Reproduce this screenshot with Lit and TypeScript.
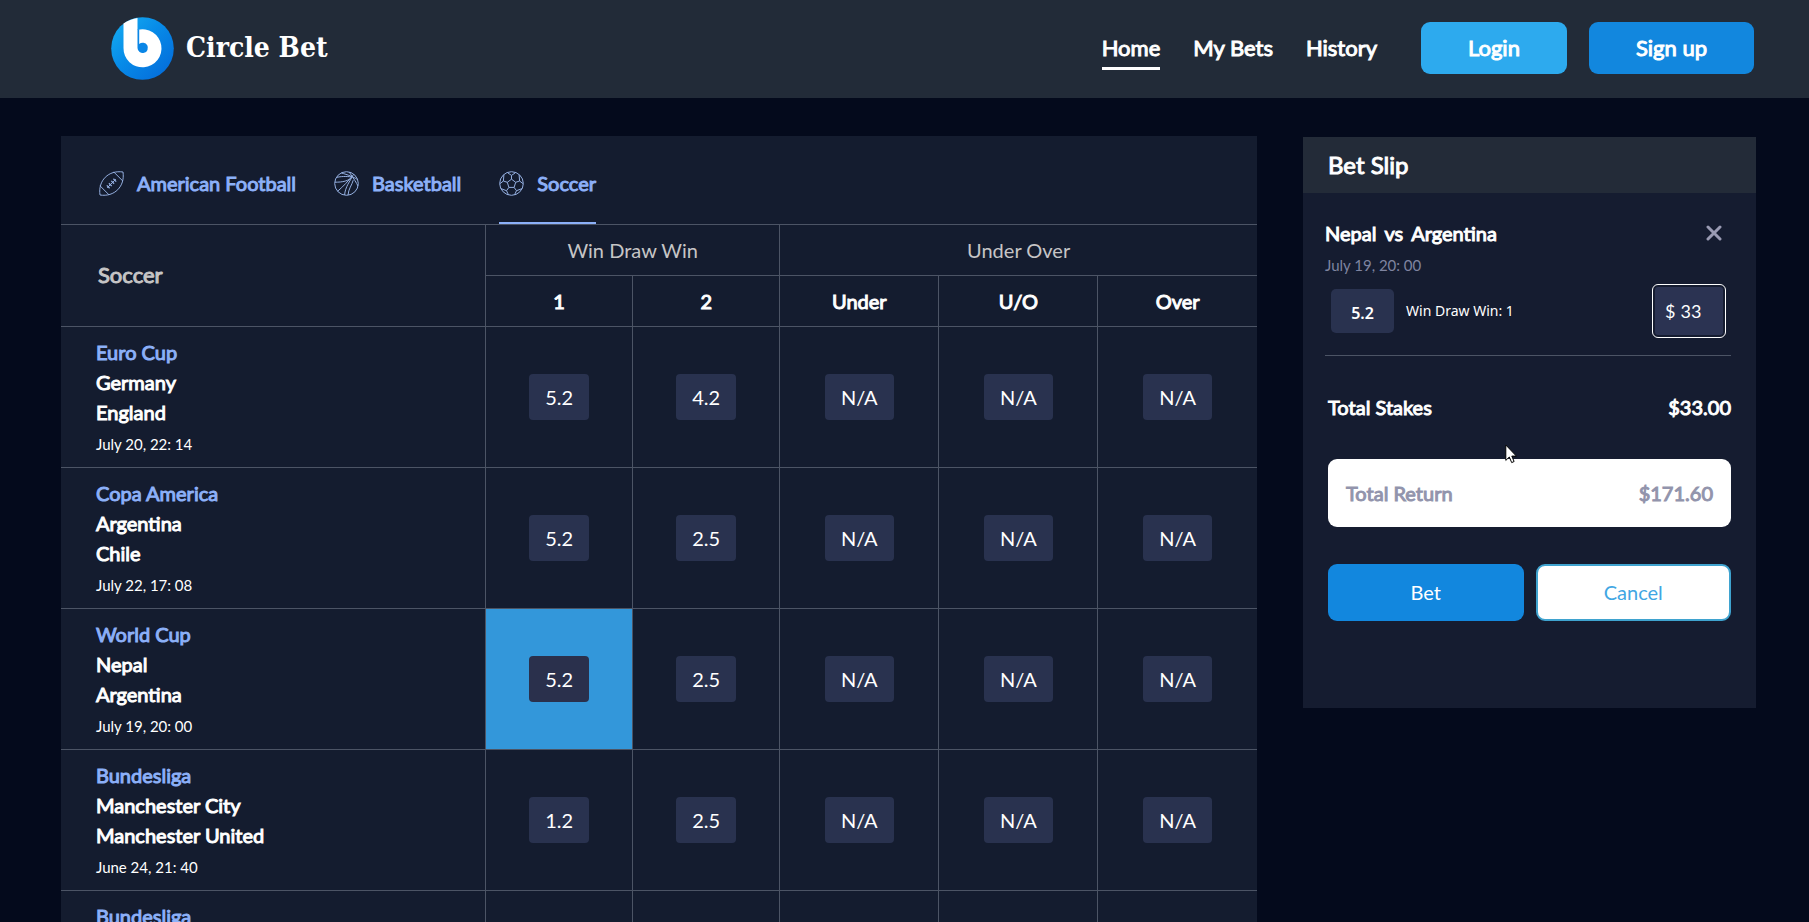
import { LitElement, html, css, svg, nothing } from "lit";
import { customElement, state } from "lit/decorators.js";
import { classMap } from "lit/directives/class-map.js";

interface Match {
  league: string;
  teams: string[];
  date: string;
  odds: string[];
}

const NA = ["N/A", "N/A", "N/A"];

const MATCHES: Match[] = [
  { league: "Euro Cup", teams: ["Germany", "England"], date: "July 20, 22: 14", odds: ["5.2", "4.2", ...NA] },
  { league: "Copa America", teams: ["Argentina", "Chile"], date: "July 22, 17: 08", odds: ["5.2", "2.5", ...NA] },
  { league: "World Cup", teams: ["Nepal", "Argentina"], date: "July 19, 20: 00", odds: ["5.2", "2.5", ...NA] },
  { league: "Bundesliga", teams: ["Manchester City", "Manchester United"], date: "June 24, 21: 40", odds: ["1.2", "2.5", ...NA] },
  { league: "Bundesliga", teams: [], date: "", odds: ["", "", "", "", ""] },
];

const shared = css`
  * { box-sizing: border-box; }
  :host { font-family: Lato, "Liberation Sans", sans-serif; font-size: 20px; line-height: 30px; color: #fff; }
  h1, h2, h3, p, ul { margin: 0; padding: 0; font-size: 20px; font-weight: 400; list-style: none; }
  button, input { font: inherit; color: inherit; margin: 0; padding: 0; border: 0; background: none; }
  a { color: inherit; text-decoration: none; }
  .strong { -webkit-text-stroke: 1px currentColor; }
`;

const football = svg`<path d="M1 24C-1.2 9.6 9.6 -1.2 24 1C26.2 15.4 15.4 26.2 1 24Z"/>
  <path d="M1 14.8L10.2 24M14.8 1L24 10.2M8.2 16.8L16.8 8.2"/>
  <path stroke-width="1.3" d="M7.8 14.4L10.6 17.2M9.9 12.3L12.7 15.1M12.3 9.9L15.1 12.7M14.4 7.8L17.2 10.6"/>`;

const basketball = svg`<circle cx="12.5" cy="12.5" r="11.8"/>
  <path d="M19.8 3.3C14.8 9.4 9 15.8 3.6 20.2M15.2 1.1C19.6 7.4 22.6 12 24 15M7.4 2C13.5 3.6 20 6.2 22.9 8.2M2.6 6.4C9 4.8 15.4 5.8 18.2 5.8M.9 11.2C8.5 11.2 14.8 10.2 18.4 5.4C16.4 9.6 11.2 15.8 10.6 24M19.2 9.2C18 14 14.4 18 14 24.1"/>`;

const soccer = svg`<circle cx="12.5" cy="12.5" r="11.8"/>
  <path d="M12.5 8.2L16.7 11.3L15.1 16.4H9.9L8.3 11.3ZM12.5 8.2V4.4M16.7 11.3L20.6 10M15.1 16.4L17.5 19.7M9.9 16.4L7.5 19.7M8.3 11.3L4.4 10M8.8 1.9L12.5 4.4L16.2 1.9M20.1 3.8L20.6 10L24.2 12.8M23.1 17.6L17.5 19.7L15.6 23.7M9.4 23.7L7.5 19.7L1.9 17.6M.8 12.8L4.4 10L4.9 3.8"/>`;

@customElement("bet-header")
class BetHeader extends LitElement {
  static styles = [shared, css`
    :host { display: block; background: #222b38; }
    .bar { display: flex; align-items: center; height: 98px; padding: 0 55px 2px 111px; }
    .brand { display: flex; align-items: center; gap: 12px; margin-right: auto; }
    .brand svg { display: block; width: 63px; height: 63px; }
    .name { font: 700 28px/40px "DejaVu Serif Condensed", "DejaVu Serif", serif; }
    nav ul { display: flex; gap: 33px; margin-right: 44px; }
    nav a { display: block; font-size: 22px; line-height: 38px; padding-top: 3px; border-bottom: 3px solid transparent; }
    nav a.active { border-color: #fff; }
    .actions { display: flex; gap: 22px; }
    .action { height: 52px; padding: 0 47px; border-radius: 9px; font-size: 22px; background: #1287de; }
    .action.light { background: #2daaee; }
  `];
  render() {
    return html`<header class="bar">
      <a class="brand" href="#">
        <svg viewBox="0 0 63 63" aria-hidden="true">
          <defs><linearGradient id="g" x1="0" y1="0" x2="1" y2="1">
            <stop offset="0" stop-color="#16b0f2"/><stop offset=".45" stop-color="#078be8"/><stop offset="1" stop-color="#0467d8"/>
          </linearGradient></defs>
          <circle cx="31.5" cy="31.5" r="31.3" fill="url(#g)"/>
          <path fill="#fff" d="M12.5 6.5Q19 2 26.5 1V13A19 19 0 1 1 12.5 31Z"/>
          <path fill="#0a86e6" d="M26.5 12.6L28.2 12.2V27A5.2 5.2 0 1 1 26.5 31Z"/>
        </svg>
        <span class="name">Circle Bet</span>
      </a>
      <nav aria-label="Main"><ul>
        ${["Home", "My Bets", "History"].map((t, i) => html`<li><a href="#" class=${classMap({ strong: true, active: i === 0 })}>${t}</a></li>`)}
      </ul></nav>
      <div class="actions">
        <button class="action light strong">Login</button>
        <button class="action strong">Sign up</button>
      </div>
    </header>`;
  }
}

@customElement("odds-board")
class OddsBoard extends LitElement {
  static styles = [shared, css`
    :host { display: block; background: #141c2f; }
    .tabs { display: flex; gap: 38px; padding: 0 38px; height: 88px; }
    .tab { display: flex; align-items: center; gap: 13px; color: #8cb0f8; border-bottom: 2px solid transparent; padding-top: 8px; }
    .tab.active { border-color: #8cb0f8; }
    .tab svg { width: 25px; height: 25px; fill: none; stroke: #94afe0; stroke-width: 1; overflow: visible; }
    table { width: 100%; border-collapse: collapse; table-layout: fixed; border-top: 1px solid #4c5465; }
    .c-match { width: 35.5%; }
    .c-win { width: 12.3%; }
    th, td { padding: 0; font-weight: 400; border: 1px solid #4c5465; text-align: center; }
    tr > :first-child:not(.in) { border-left: 0; }
    .edge { border-right: 0; }
    thead th { height: 51px; }
    .group { color: #c6c5c6; }
    thead .sport { color: #c6c5c6; font-size: 22px; text-align: left; padding: 0 0 2px 37px; }
    tbody tr { height: 141px; }
    .match { text-align: left; vertical-align: top; padding: 10px 35px; }
    .match p { height: 30px; }
    .league { color: #8cb0f8; }
    .match .date { font-size: 15px; line-height: 34px; }
    .odd { height: 46px; padding: 0 16px; border-radius: 4px; background: #29324f; vertical-align: middle; }
    .selected { background: #3397da; }
    .selected .odd { background: #2a304c; }
  `];
  @state() selected = "2-0";
  render() {
    const tabs: [string, unknown][] = [["American Football", football], ["Basketball", basketball], ["Soccer", soccer]];
    return html`
      <nav class="tabs" aria-label="Sports">
        ${tabs.map(([t, icon], i) => html`<a href="#" class=${classMap({ tab: true, active: i === 2 })}>
          <svg viewBox="0 0 25 25" aria-hidden="true">${icon}</svg><span class="strong">${t}</span></a>`)}
      </nav>
      <table>
        <colgroup><col class="c-match"><col class="c-win"><col class="c-win"><col><col><col></colgroup>
        <thead>
          <tr><th class="sport strong" rowspan="2">Soccer</th><th class="group" colspan="2">Win Draw Win</th><th class="group edge" colspan="3">Under Over</th></tr>
          <tr>${["1", "2", "Under", "U/O", "Over"].map((t, i) => html`<th class=${classMap({ in: true, strong: true, edge: i === 4 })}>${t}</th>`)}</tr>
        </thead>
        <tbody>
          ${MATCHES.map((m, r) => html`<tr>
            <td class="match">
              <p class="league strong">${m.league}</p>
              ${m.teams.map(t => html`<p class="strong">${t}</p>`)}
              ${m.date ? html`<p class="date">${m.date}</p>` : nothing}
            </td>
            ${m.odds.map((o, c) => html`<td class=${classMap({ selected: this.selected === `${r}-${c}`, edge: c === 4 })}>
              ${o ? html`<button class="odd" @click=${() => (this.selected = `${r}-${c}`)}>${o}</button>` : nothing}
            </td>`)}
          </tr>`)}
        </tbody>
      </table>`;
  }
}

@customElement("bet-slip")
class BetSlip extends LitElement {
  static styles = [shared, css`
    :host { display: block; background: #151c30; padding-bottom: 87px; }
    .title { background: #232b38; font-size: 24px; line-height: 56px; padding-left: 25px; }
    .pick { margin: 0 25px 0 22px; padding-top: 24px; border-bottom: 1px solid #4c5465; }
    .top { display: flex; justify-content: space-between; align-items: center; height: 32px; }
    .versus { display: flex; gap: 8px; }
    .close { width: 34px; height: 32px; display: grid; place-items: center; color: #9a9bb3; }
    .close svg { width: 16px; height: 16px; stroke: currentColor; stroke-width: 3; stroke-linecap: round; }
    .date { font-size: 15px; line-height: 32px; color: #7f84a0; height: 34px; }
    .stake { display: flex; align-items: center; padding: 4px 8px 20px 6px; font-family: "Noto Sans", "Open Sans", sans-serif; font-size: 14px; }
    .price { width: 63px; height: 44px; border-radius: 5px; background: #29324f; display: grid; place-items: center; font-size: 16px; font-weight: 600; margin-right: 12px; padding-top: 4px; }
    .amount { display: flex; align-items: center; gap: 5px; width: 68px; height: 48px; margin-left: auto; padding-left: 10px; background: #2b3352; border-radius: 3px; outline: 1px solid #fff; outline-offset: 2px; font: 18px/30px Lato, sans-serif; }
    .amount input { width: 36px; outline: none; }
    .body { padding: 36px 25px 0; }
    .row { display: flex; justify-content: space-between; }
    .return { align-items: center; margin-top: 37px; height: 68px; padding: 0 18px; border-radius: 9px; background: #fff; color: #9294ac; }
    .buttons { display: grid; grid-template-columns: 1fr 1fr; gap: 12px; margin-top: 37px; }
    .buttons button { height: 57px; padding-bottom: 2px; border-radius: 9px; background: #1287de; }
    .buttons .cancel { background: #fff; color: #41a6e3; border: 2px solid #3fa3cf; }
  `];
  render() {
    return html`
      <h2 class="title strong">Bet Slip</h2>
      <section class="pick">
        <div class="top">
          <h3 class="versus strong"><span>Nepal</span><span>vs</span><span>Argentina</span></h3>
          <button class="close" aria-label="Remove"><svg viewBox="0 0 16 16"><path d="M2 2L14 14M14 2L2 14"/></svg></button>
        </div>
        <p class="date">July 19, 20: 00</p>
        <div class="stake">
          <span class="price">5.2</span><span>Win Draw Win: 1</span>
          <label class="amount">$<input aria-label="Stake" .value=${"33"}></label>
        </div>
      </section>
      <div class="body">
        <div class="row strong"><span>Total Stakes</span><span>$33.00</span></div>
        <div class="row return strong"><span>Total Return</span><span>$171.60</span></div>
        <div class="buttons"><button>Bet</button><button class="cancel">Cancel</button></div>
      </div>`;
  }
}

@customElement("app-root")
class AppRoot extends LitElement {
  static styles = css`
    :host { display: flex; flex-direction: column; height: 100vh; background: #040a1c; }
    .main { flex: 1; min-height: 0; overflow-y: auto; scrollbar-width: none; display: grid; grid-template-columns: minmax(0, 1196fr) minmax(0, 453fr); align-items: start; gap: 46px; padding: 38px 53px 0 61px; }
    .slip { margin-top: 1px; }
    .pointer { position: absolute; left: 1505px; top: 444px; width: 12px; height: 20px; }
  `;
  render() {
    return html`
      <bet-header></bet-header>
      <main class="main">
        <odds-board></odds-board>
        <bet-slip class="slip"></bet-slip>
      </main>
      <svg class="pointer" viewBox="0 0 12 20" aria-hidden="true"><path d="M.8 1V16.4L4.3 13L6.7 18.6L9.1 17.5L6.8 12.1H11.4Z" fill="#fff" stroke="#000" stroke-width="1"/></svg>`;
  }
}
